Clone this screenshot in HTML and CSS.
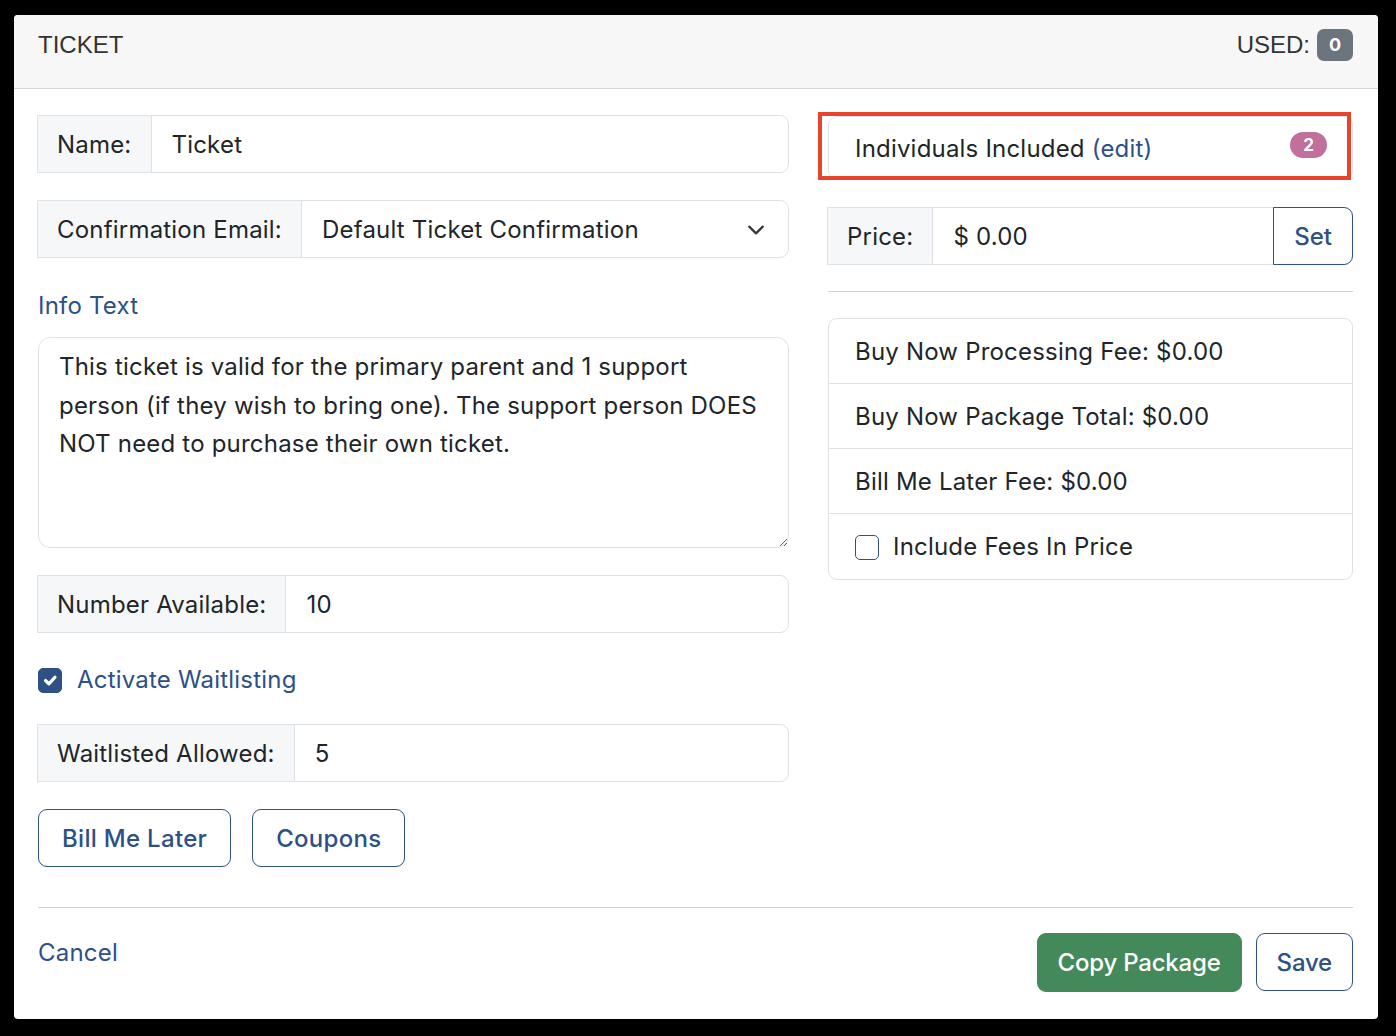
FILE: index.html
```html
<!DOCTYPE html>
<html lang="en">
<head>
    <meta charset="UTF-8">
    <meta name="viewport" content="width=device-width, initial-scale=1.0">
    <title>Ticket</title>
    <link rel="stylesheet" href="styles.css">
</head>
<body>
    <div class="modal">
        <div class="modal-header">
            <h5 class="modal-title">TICKET</h5>
            <div class="used">USED: <span class="badge badge-gray">0</span></div>
        </div>

        <div class="modal-body">
            <div class="row">
                <!-- ticket details -->
                <div class="col-left">
                    <div class="input-group">
                        <span class="input-label">Name:</span>
                        <input class="input-field" type="text" value="Ticket">
                    </div>

                    <div class="input-group">
                        <span class="input-label">Confirmation Email:</span>
                        <div class="select-field">
                            <span>Default Ticket Confirmation</span>
                            <svg class="chevron" width="18" height="18" viewBox="0 0 16 16">
                                <path d="M2 5l6 6 6-6" fill="none" stroke="#343a40" stroke-width="2" stroke-linecap="round" stroke-linejoin="round"/>
                            </svg>
                        </div>
                    </div>

                    <a href="#" class="info-link">Info Text</a>
                    <textarea class="info-text">This ticket is valid for the primary parent and 1 support person (if they wish to bring one). The support person DOES NOT need to purchase their own ticket.</textarea>

                    <div class="input-group">
                        <span class="input-label">Number Available:</span>
                        <input class="input-field" type="text" value="10">
                    </div>

                    <label class="check-row">
                        <input type="checkbox" class="check" checked>
                        <span class="check-label">Activate Waitlisting</span>
                    </label>

                    <div class="input-group">
                        <span class="input-label">Waitlisted Allowed:</span>
                        <input class="input-field" type="text" value="5">
                    </div>

                    <div class="button-row">
                        <button class="btn btn-outline btn-wide">Bill Me Later</button>
                        <button class="btn btn-outline btn-wide">Coupons</button>
                    </div>
                </div>

                <!-- pricing -->
                <div class="col-right">
                    <div class="individuals">
                        <span>Individuals Included <a href="#" class="edit-link">(edit)</a></span>
                        <span class="badge badge-pink">2</span>
                        <div class="highlight"></div>
                    </div>

                    <div class="input-group">
                        <span class="input-label">Price:</span>
                        <input class="input-field" type="text" value="$ 0.00">
                        <button class="btn btn-outline btn-addon">Set</button>
                    </div>

                    <hr class="divider">

                    <ul class="fee-list">
                        <li>Buy Now Processing Fee: $0.00</li>
                        <li>Buy Now Package Total: $0.00</li>
                        <li>Bill Me Later Fee: $0.00</li>
                        <li>
                            <label class="fee-check">
                                <input type="checkbox" class="check">
                                <span>Include Fees In Price</span>
                            </label>
                        </li>
                    </ul>
                </div>
            </div>

            <hr class="divider footer-divider">

            <div class="modal-footer">
                <a href="#" class="cancel-link">Cancel</a>
                <div class="footer-actions">
                    <button class="btn btn-success">Copy Package</button>
                    <button class="btn btn-outline">Save</button>
                </div>
            </div>
        </div>
    </div>
</body>
</html>
```

FILE: styles.css
```css
* {
    box-sizing: border-box;
}

body {
    margin: 0;
    padding: 15px 18px 17px 14px;
    background: #000;
    font-family: Inter, "Noto Sans", sans-serif;
    font-size: 24px;
    line-height: 36px;
    letter-spacing: 0.2px;
    color: #212529;
}

.modal {
    background: white;
    border-radius: 4px;
    height: 1004px;
    overflow: hidden;
}

/* header */
.modal-header {
    display: flex;
    justify-content: space-between;
    align-items: flex-start;
    height: 74px;
    padding: 12px 25px 0 24px;
    background: #f7f7f7;
    border-bottom: 1px solid #d6d6d6;
    font-family: "Liberation Sans", Arial, sans-serif;
    letter-spacing: 0;
    color: #333;
}

.modal-title {
    margin: 0;
    font-size: 24px;
    font-weight: normal;
    line-height: 36px;
}

.used {
    display: flex;
    align-items: center;
    gap: 7px;
    margin-top: 2px;
    line-height: 32px;
}

.badge {
    display: inline-flex;
    align-items: center;
    justify-content: center;
    color: white;
    font-weight: 700;
    font-family: Inter, sans-serif;
    letter-spacing: 0;
}

.badge-gray {
    width: 36px;
    height: 32px;
    background: #6c757d;
    border-radius: 7px;
    font-size: 18px;
}

.badge-pink {
    flex-shrink: 0;
    width: 37px;
    height: 26px;
    background: #c0709a;
    border-radius: 13px;
    font-size: 17px;
    margin-top: -8px;
}

/* body */
.modal-body {
    padding: 26px 25px 0 23px;
}

.row {
    display: grid;
    grid-template-columns: 752px minmax(0, 1fr);
    column-gap: 38px;
}

.input-group {
    display: flex;
    height: 58px;
    margin-bottom: 27px;
    border: 1px solid #dee2e6;
    border-radius: 0 9px 9px 0;
}

.input-label {
    display: flex;
    align-items: center;
    padding: 2px 19px 0;
    background: #f6f7f9;
    border-right: 1px solid #dee2e6;
    white-space: nowrap;
}

.input-field {
    flex: 1;
    min-width: 0;
    width: 100%;
    border: none;
    outline: none;
    background: transparent;
    padding: 2px 20px 0;
    font: inherit;
    letter-spacing: inherit;
    color: #212529;
    border-radius: 0 9px 9px 0;
}

.select-field {
    flex: 1;
    display: flex;
    align-items: center;
    justify-content: space-between;
    padding: 2px 23px 0 20px;
}

.chevron {
    display: block;
}

.info-link,
.edit-link,
.cancel-link,
.check-label {
    color: #2d5086;
    text-decoration: none;
}

.info-link {
    display: block;
    padding-top: 3px;
    margin: 0 0 13px 1px;
}

.info-text {
    display: block;
    width: 751px;
    height: 211px;
    margin: 0 0 27px 1px;
    padding: 10px 20px 8px;
    border: 1px solid #dee2e6;
    border-radius: 12px;
    font: inherit;
    letter-spacing: inherit;
    line-height: 38.5px;
    color: #212529;
    resize: vertical;
}

.check-row {
    display: flex;
    align-items: center;
    gap: 15px;
    height: 38px;
    padding-top: 2px;
    margin: 0 0 26px 1px;
}

.check {
    appearance: none;
    margin: 0;
    width: 24px;
    height: 25px;
    border: 1px solid #2d5086;
    border-radius: 5px;
    background: white;
    flex-shrink: 0;
}

.check:checked {
    background: #2d5086 url("data:image/svg+xml,%3Csvg xmlns='http://www.w3.org/2000/svg' viewBox='0 0 20 20'%3E%3Cpath d='M6 10.5l3 3 5.5-6' fill='none' stroke='white' stroke-width='3' stroke-linecap='round' stroke-linejoin='round'/%3E%3C/svg%3E") center / 100% no-repeat;
}

.button-row {
    display: flex;
    gap: 21px;
    margin-left: 1px;
}

.btn {
    height: 58px;
    padding: 0 20px;
    border-radius: 9px;
    font-family: inherit;
    font-size: 24px;
    font-weight: 500;
    letter-spacing: -0.2px;
    cursor: pointer;
}

.btn-wide {
    padding: 0 23px;
    letter-spacing: 0.3px;
}

.btn-outline {
    background: white;
    border: 1px solid #2d5086;
    color: #2d5086;
}

.btn-addon {
    height: 58px;
    margin: -1px -1px -1px 0;
    border-radius: 0 9px 9px 0;
    letter-spacing: 0;
}

.btn-success {
    height: 59px;
    background: #43895a;
    border: 1px solid #43895a;
    color: white;
}

/* right column */
.individuals {
    position: relative;
    display: flex;
    align-items: center;
    justify-content: space-between;
    height: 64px;
    margin: 1px 0 27px 1px;
    padding: 2px 25px 0 26px;
    border: 1px solid #dee2e6;
    border-radius: 9px;
}

.highlight {
    position: absolute;
    left: -11px;
    top: -5px;
    width: 533px;
    height: 68px;
    border: 4px solid #e8442c;
    pointer-events: none;
}

.divider {
    margin: 0 0 26px 1px;
    border: none;
    border-top: 1px solid #ced4da;
}

.col-right .input-group {
    margin-bottom: 26px;
}

.fee-list {
    list-style: none;
    margin: 0 0 0 1px;
    padding: 0;
    border: 1px solid #dee2e6;
    border-radius: 9px;
}

.fee-list li {
    padding: 15px 26px 13px;
    border-bottom: 1px solid #dee2e6;
}

.fee-list li:last-child {
    border-bottom: none;
    padding-bottom: 14px;
}

.fee-check {
    display: flex;
    align-items: center;
    gap: 14px;
}

/* footer */
.footer-divider {
    margin: 40px 0 25px 1px;
}

.modal-footer {
    display: flex;
    justify-content: space-between;
    align-items: flex-start;
}

.cancel-link {
    margin: 2px 0 0 1px;
}

.footer-actions {
    display: flex;
    gap: 14px;
}
```
